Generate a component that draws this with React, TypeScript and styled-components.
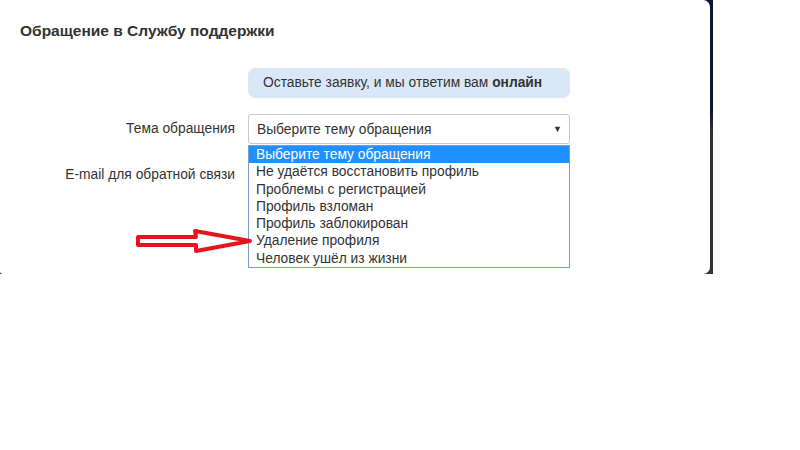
import React from "react";
import styled, { createGlobalStyle } from "styled-components";

const GlobalStyle = createGlobalStyle`
  html, body {
    margin: 0;
    padding: 0;
    background: #ffffff;
    font-family: "Liberation Sans", Arial, sans-serif;
  }
`;

const topics = [
  "Выберите тему обращения",
  "Не удаётся восстановить профиль",
  "Проблемы с регистрацией",
  "Профиль взломан",
  "Профиль заблокирован",
  "Удаление профиля",
  "Человек ушёл из жизни",
];

const Backdrop = styled.div`
  width: 713px;
  height: 274px;
  background: linear-gradient(180deg, #0a1934 0%, #0a1934 40%, #333333 48%, #333333 100%);
`;

const Modal = styled.div`
  position: relative;
  width: 710px;
  height: 274px;
  background: #ffffff;
  border-radius: 0 7px 7px 3px;
  box-sizing: border-box;
  padding: 21px 20px 0 20px;
  color: #333333;
`;

const Title = styled.h4`
  margin: 0;
  font-size: 15.5px;
  font-weight: bold;
  line-height: 20px;
  color: #333333;
`;

const Form = styled.div`
  display: grid;
  grid-template-columns: 215px 322px;
  column-gap: 13px;
  row-gap: 16px;
  margin-top: 27px;
`;

const Label = styled.label`
  font-size: 13.8px;
  text-align: right;
  line-height: 30px;
  color: #333333;
`;

const Notice = styled.div`
  grid-column: 2;
  height: 30px;
  line-height: 30px;
  background: #d9e7f6;
  border-radius: 7px;
  padding: 0 15px;
  font-size: 13.8px;
  color: #333333;
`;

const SelectWrap = styled.div`
  position: relative;
`;

const SelectBox = styled.div`
  height: 30px;
  box-sizing: border-box;
  border: 1px solid #c8c8c8;
  border-radius: 3px;
  padding: 0 8px;
  display: flex;
  align-items: center;
  justify-content: space-between;
  font-size: 13.8px;
  color: #333333;
`;

const Caret = styled.span`
  font-size: 9px;
  color: #333333;
  margin-right: -1px;
`;

const Options = styled.ul`
  position: absolute;
  top: 31px;
  left: 0;
  z-index: 2;
  width: 322px;
  box-sizing: border-box;
  margin: 0;
  padding: 0;
  list-style: none;
  background: #ffffff;
  border: 1px solid #7a9cd3;
`;

const Option = styled.li<{ $active?: boolean }>`
  height: 17.3px;
  line-height: 17.3px;
  padding: 0 7px;
  font-size: 13.8px;
  background: ${(p) => (p.$active ? "#1e90ff" : "#ffffff")};
  color: ${(p) => (p.$active ? "#ffffff" : "#333333")};
`;

const EmailInput = styled.div`
  height: 30px;
  box-sizing: border-box;
  border: 1px solid #c8c8c8;
  border-radius: 3px;
`;

const Pointer = styled.svg`
  position: absolute;
  left: 133px;
  top: 227px;
  z-index: 3;
`;

const App = () => {
  return (
    <>
      <GlobalStyle />
      <Backdrop>
        <Modal>
          <Title>Обращение в Службу поддержки</Title>
          <Form>
            <Notice>
              Оставьте заявку, и мы ответим вам <b>онлайн</b>
            </Notice>
            <Label>Тема обращения</Label>
            <SelectWrap>
              <SelectBox>
                <span>Выберите тему обращения</span>
                <Caret>▼</Caret>
              </SelectBox>
              <Options>
                {topics.map((t, i) => (
                  <Option key={t} $active={i === 0}>
                    {t}
                  </Option>
                ))}
              </Options>
            </SelectWrap>
            <Label>E-mail для обратной связи</Label>
            <EmailInput />
          </Form>
          <Pointer width="124" height="30" viewBox="0 0 124 30">
            <path
              d="M5 10 L63 10 L62 4 L117 14 L63 24 L63 18 L5 18 Z"
              fill="#ffffff"
              stroke="#e8141c"
              strokeWidth="4"
              strokeLinejoin="round"
            />
          </Pointer>
        </Modal>
      </Backdrop>
    </>
  );
};

export default App;
